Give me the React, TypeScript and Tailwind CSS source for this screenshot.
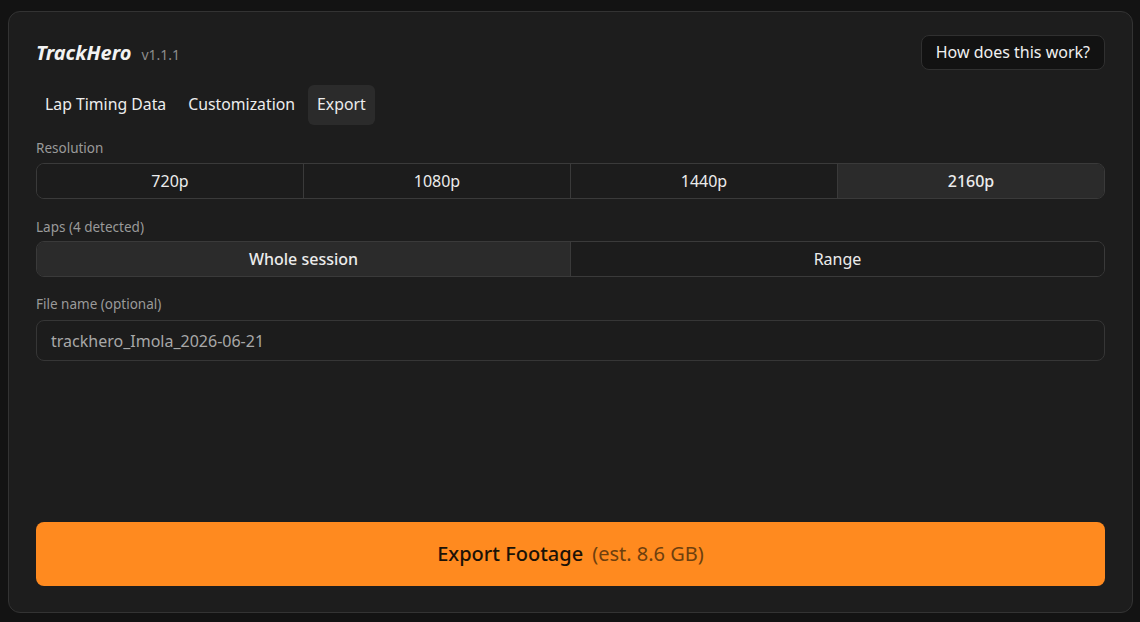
import React from 'react';

const resolutions = ['720p', '1080p', '1440p', '2160p'];
const lapModes = ['Whole session', 'Range'];

function Segmented({ items, active }: { items: string[]; active: string }) {
  return (
    <div className="flex h-[36px] rounded-lg border border-[#3a3a3a] overflow-hidden">
      {items.map((item, i) => (
        <button
          key={item}
          className={
            'flex-1 flex items-center justify-center text-[16px] text-[#ececec] ' +
            (i > 0 ? 'border-l border-[#3a3a3a] ' : '') +
            (item === active ? 'bg-[#2b2b2b] font-medium' : 'bg-[#1c1c1c]')
          }
        >
          {item}
        </button>
      ))}
    </div>
  );
}

export default function App() {
  return (
    <div
      className="h-[622px] w-full bg-[#131313] pl-2 pr-[7px] pt-[11px] pb-[9px] flex"
      style={{ fontFamily: '"Noto Sans", "Open Sans", sans-serif' }}
    >
      <div className="flex-1 flex flex-col rounded-xl border border-[#333333] bg-[#1d1d1d] pt-[22px] pb-[26px] pl-[27px] pr-[27px]">
        <div className="flex items-center justify-between h-[36px]">
          <div className="flex items-baseline gap-[10px] pt-[2px]">
            <span className="text-[20px] font-bold italic text-[#f3f3f3]">TrackHero</span>
            <span className="text-[14px] text-[#8c8c8c]">v1.1.1</span>
          </div>
          <button className="h-[35px] px-[14px] rounded-lg border border-[#303030] bg-[#121212] text-[16px] text-[#f0f0f0]">
            How does this work?
          </button>
        </div>

        <div className="mt-[15px] flex gap-1">
          {['Lap Timing Data', 'Customization', 'Export'].map((t) => (
            <button
              key={t}
              className={
                'h-[40px] px-[9px] rounded-md text-[15.8px] text-[#ededed] ' +
                (t === 'Export' ? 'bg-[#2b2b2b]' : '')
              }
            >
              {t}
            </button>
          ))}
        </div>

        <div className="mt-[14px] text-[13.5px] text-[#9a9a9a] leading-[18px]">Resolution</div>
        <div className="mt-[6px]">
          <Segmented items={resolutions} active="2160p" />
        </div>

        <div className="mt-[19px] text-[13.5px] text-[#9a9a9a] leading-[18px]">Laps (4 detected)</div>
        <div className="mt-[5px]">
          <Segmented items={lapModes} active="Whole session" />
        </div>

        <div className="mt-[18px] text-[13.5px] text-[#9a9a9a] leading-[18px]">File name (optional)</div>
        <div className="mt-[7px] h-[41px] rounded-lg border border-[#363636] bg-[#1c1c1c] flex items-center px-[14px] text-[16px] text-[#a8a8a8]">
          trackhero_Imola_2026-06-21
        </div>

        <div className="flex-1" />

        <button className="h-[64px] rounded-lg bg-[#ff8a1f] flex items-center justify-center gap-[9px]">
          <span className="text-[20px] font-medium text-[#1b1207]">Export Footage</span>
          <span className="text-[20px] text-[#6e3f0e]">(est. 8.6 GB)</span>
        </button>
      </div>
    </div>
  );
}
